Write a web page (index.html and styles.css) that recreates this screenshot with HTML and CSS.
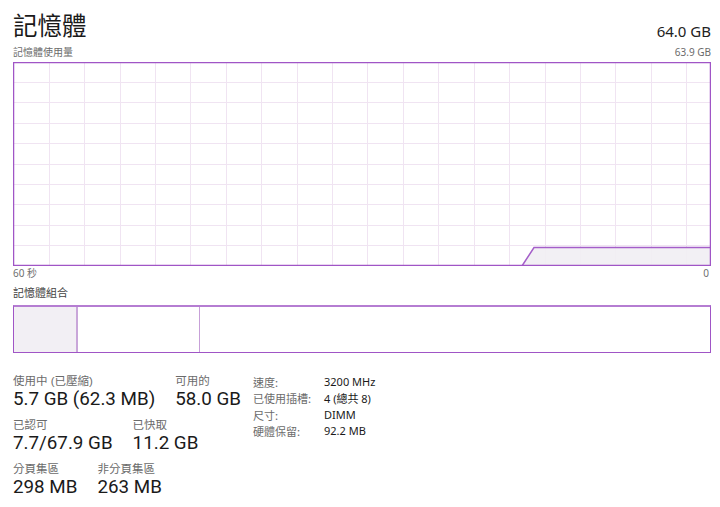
FILE: index.html
```html
<!DOCTYPE html>
<html lang="zh-Hant">
<head>
<meta charset="utf-8">
<link rel="stylesheet" href="styles.css">
</head>
<body>
<div class="page">
  <header class="head">
    <h1 class="title">記憶體</h1>
    <div class="total">64.0 GB</div>
  </header>
  <div class="sub">
    <span>記憶體使用量</span>
    <span>63.9 GB</span>
  </div>
  <div class="chart">
    <svg width="698" height="204" viewBox="0 0 698 204">
      <g stroke="#f0e4f2" stroke-width="1">
        <line x1="36.5" y1="0" x2="36.5" y2="204"/>
        <line x1="71.5" y1="0" x2="71.5" y2="204"/>
        <line x1="107.5" y1="0" x2="107.5" y2="204"/>
        <line x1="142.5" y1="0" x2="142.5" y2="204"/>
        <line x1="177.5" y1="0" x2="177.5" y2="204"/>
        <line x1="213.5" y1="0" x2="213.5" y2="204"/>
        <line x1="248.5" y1="0" x2="248.5" y2="204"/>
        <line x1="284.5" y1="0" x2="284.5" y2="204"/>
        <line x1="319.5" y1="0" x2="319.5" y2="204"/>
        <line x1="354.5" y1="0" x2="354.5" y2="204"/>
        <line x1="390.5" y1="0" x2="390.5" y2="204"/>
        <line x1="425.5" y1="0" x2="425.5" y2="204"/>
        <line x1="461.5" y1="0" x2="461.5" y2="204"/>
        <line x1="496.5" y1="0" x2="496.5" y2="204"/>
        <line x1="532.5" y1="0" x2="532.5" y2="204"/>
        <line x1="567.5" y1="0" x2="567.5" y2="204"/>
        <line x1="602.5" y1="0" x2="602.5" y2="204"/>
        <line x1="638.5" y1="0" x2="638.5" y2="204"/>
        <line x1="673.5" y1="0" x2="673.5" y2="204"/>
        <line x1="0" y1="20.5" x2="698" y2="20.5"/>
        <line x1="0" y1="40.5" x2="698" y2="40.5"/>
        <line x1="0" y1="61.5" x2="698" y2="61.5"/>
        <line x1="0" y1="81.5" x2="698" y2="81.5"/>
        <line x1="0" y1="102.5" x2="698" y2="102.5"/>
        <line x1="0" y1="122.5" x2="698" y2="122.5"/>
        <line x1="0" y1="142.5" x2="698" y2="142.5"/>
        <line x1="0" y1="163.5" x2="698" y2="163.5"/>
        <line x1="0" y1="183.5" x2="698" y2="183.5"/>
      </g>
      <polygon points="509,204 521,185.5 698,185.5 698,204" fill="#f1eef3" fill-opacity="0.9"/>
      <polyline points="509,204 521,185.5 698,185.5" fill="none" stroke="#a45ec9" stroke-width="1.5"/>
      <rect x="0.5" y="0.5" width="697" height="203" fill="none" stroke="#a055c6" stroke-width="1.5"/>
    </svg>
  </div>
  <div class="axis">
    <span>60 秒</span>
    <span>0</span>
  </div>
  <div class="section">記憶體組合</div>
  <div class="compo">
    <div class="seg inuse" style="width:62px"></div>
    <div class="seg modified" style="width:1px"></div>
    <div class="seg standby" style="width:120px"></div>
    <div class="seg free"></div>
  </div>
  <div class="stats">
    <div class="left">
      <div class="row">
        <div class="stat"><div class="lbl">使用中 (已壓縮)</div><div class="val">5.7 GB (62.3 MB)</div></div>
        <div class="stat"><div class="lbl">可用的</div><div class="val">58.0 GB</div></div>
      </div>
      <div class="row">
        <div class="stat"><div class="lbl">已認可</div><div class="val">7.7/67.9 GB</div></div>
        <div class="stat"><div class="lbl">已快取</div><div class="val">11.2 GB</div></div>
      </div>
      <div class="row">
        <div class="stat"><div class="lbl">分頁集區</div><div class="val">298 MB</div></div>
        <div class="stat"><div class="lbl">非分頁集區</div><div class="val">263 MB</div></div>
      </div>
    </div>
    <div class="right">
      <div class="k">速度:</div><div class="v">3200 MHz</div>
      <div class="k">已使用插槽:</div><div class="v">4 (總共 8)</div>
      <div class="k">尺寸:</div><div class="v">DIMM</div>
      <div class="k">硬體保留:</div><div class="v">92.2 MB</div>
    </div>
  </div>
</div>
</body>
</html>
```

FILE: styles.css
```css
html, body {
  margin: 0;
  padding: 0;
  background: #ffffff;
}
body {
  font-family: "Segoe UI", "Noto Sans", "Noto Sans CJK TC", sans-serif;
  color: #1a1a1a;
}
.page {
  width: 698px;
  padding: 0 9px 0 13px;
}
.head {
  display: flex;
  justify-content: space-between;
  align-items: flex-end;
  height: 40px;
}
.title {
  margin: 0;
  font-weight: 400;
  font-size: 24.5px;
  line-height: 40px;
  color: #1a1a1a;
  font-family: "Noto Sans CJK TC", sans-serif;
  position: relative;
  top: 5px;
}
.total {
  font-size: 15px;
  line-height: 20px;
  color: #222;
  position: relative;
  top: 1px;
}
.sub {
  display: flex;
  justify-content: space-between;
  font-size: 10px;
  line-height: 14px;
  color: #6b6b6b;
  height: 17px;
  padding-top: 5px;
}
.chart {
  height: 204px;
}
.chart svg {
  display: block;
}
.axis {
  display: flex;
  justify-content: space-between;
  font-size: 10px;
  line-height: 14px;
  color: #707070;
  height: 16px;
  padding-right: 2px;
}
.section {
  font-size: 11px;
  line-height: 16px;
  color: #444;
  height: 20px;
  padding-top: 3px;
}
.compo {
  display: flex;
  height: 45px;
  border: 1.5px solid #a055c6;
  border-top: 2px solid #b57dd2;
}
.seg {
  height: 100%;
}
.inuse {
  background: #f2eff4;
  border-right: 2px solid #c9a6d9;
}
.modified {
  background: #fff;
}
.standby {
  border-right: 1px solid #c7a0d8;
}
.free {
  flex: 1;
}
.stats {
  display: flex;
  margin-top: 22px;
}
.left {
  display: flex;
  flex-direction: column;
  gap: 7px;
}
.row {
  display: flex;
  gap: 20px;
}
.lbl {
  font-family: "Liberation Sans", "Noto Sans CJK TC", sans-serif;
  font-size: 11.5px;
  line-height: 12px;
  height: 12px;
  color: #6b6b6b;
}
.val {
  font-family: Roboto, "Noto Sans", sans-serif;
  font-size: 18.8px;
  line-height: 25px;
  color: #1a1a1a;
}
.right {
  display: grid;
  grid-template-columns: 71px auto;
  grid-auto-rows: 16.3px;
  margin-left: 12px;
  margin-top: -1px;
  font-size: 11px;
  align-content: start;
}
.k {
  font-family: "Noto Sans CJK TC", "Noto Sans", sans-serif;
  color: #6b6b6b;
}
.v {
  color: #1a1a1a;
}
```
